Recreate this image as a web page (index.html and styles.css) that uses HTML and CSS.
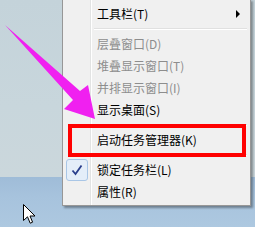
FILE: index.html
```html
<!DOCTYPE html>
<html>
<head>
<meta charset="utf-8">
<link rel="stylesheet" href="styles.css">
</head>
<body>
<div class="desktop">
  <div class="wall"></div>
  <div class="taskbar"></div>

  <div class="menu">
    <div class="item has-sub"><span class="label">工具栏(T)</span><span class="sub-arrow"></span></div>
    <div class="sep"></div>
    <div class="item disabled"><span class="label">层叠窗口(D)</span></div>
    <div class="item disabled"><span class="label">堆叠显示窗口(T)</span></div>
    <div class="item disabled"><span class="label">并排显示窗口(I)</span></div>
    <div class="item"><span class="label">显示桌面(S)</span></div>
    <div class="sep"></div>
    <div class="item"><span class="label">启动任务管理器(K)</span></div>
    <div class="sep"></div>
    <div class="item checked"><span class="check"><svg width="12" height="12" viewBox="0 0 12 12"><path d="M1.5 6.5 L4.5 10 L10.5 1.5" fill="none" stroke="#2a3f8c" stroke-width="1.8"/></svg></span><span class="label">锁定任务栏(L)</span></div>
    <div class="item"><span class="label">属性(R)</span></div>
  </div>

  <div class="highlight-box"></div>

  <svg class="pointer-arrow" width="110" height="130" viewBox="0 0 110 130">
    <polygon points="5,25 80,91 88,85 95,119 64,109 73,100" fill="#f020f0"/>
  </svg>

  <svg class="cursor" width="13" height="21" viewBox="0 0 13 21">
    <path d="M0.5 0.5 L0.5 16.5 L4.5 12.8 L7.2 19.2 L9.6 18.2 L7 12 L12 12 Z" fill="#fff" stroke="#000" stroke-width="1"/>
  </svg>
</div>
</body>
</html>
```

FILE: styles.css
```css
html, body {
  margin: 0;
  padding: 0;
}
body {
  width: 255px;
  height: 227px;
  overflow: hidden;
  font-family: "Noto Sans CJK SC", "Noto Sans", sans-serif;
}
.desktop {
  position: relative;
  width: 255px;
  height: 227px;
  display: flex;
  flex-direction: column;
}
.wall {
  height: 177px;
  background: linear-gradient(180deg, #c4d3da 0%, #c8d6dc 60%, #cbd7dc 100%);
}
.taskbar {
  flex: 1;
  background: linear-gradient(180deg, #9fbcd8 0%, #a7c3dd 40%, #adc8e0 100%);
}
.menu {
  position: absolute;
  left: 62px;
  top: -1px;
  width: 185px;
  padding: 3px 1px 2px 1px;
  background: #f0f0f0;
  border: 1px solid #979797;
  box-shadow: 2px 2px 2px rgba(0,0,0,0.35);
  background-image: linear-gradient(90deg, transparent 27px, #e2e3e3 27px, #e2e3e3 28px, #ffffff 28px, #ffffff 29px, transparent 29px);
}
.item {
  position: relative;
  height: 22px;
  display: flex;
  align-items: center;
  padding-left: 33px;
  font-size: 12px;
  color: #000;
  line-height: 22px;
}
.item.disabled {
  color: #8d8d8d;
}
.sub-arrow {
  position: absolute;
  right: 9px;
  top: 7px;
  width: 0;
  height: 0;
  border-top: 4px solid transparent;
  border-bottom: 4px solid transparent;
  border-left: 4px solid #000;
}
.sep {
  height: 8px;
  margin-left: 30px;
  margin-right: 2px;
  background: linear-gradient(180deg, transparent 3px, #e0e0e0 3px, #e0e0e0 4px, #ffffff 4px, #ffffff 5px, transparent 5px);
}
.check {
  position: absolute;
  left: 2px;
  top: 0;
  width: 20px;
  height: 20px;
  border: 1px solid #a9c6e6;
  border-radius: 3px;
  background: #e4eef9;
  display: flex;
  align-items: center;
  justify-content: center;
}
.highlight-box {
  position: absolute;
  left: 68px;
  top: 124px;
  width: 170px;
  height: 25px;
  border: 4px solid #ff0000;
}
.pointer-arrow {
  position: absolute;
  left: 0;
  top: 0;
}
.cursor {
  position: absolute;
  left: 23px;
  top: 204px;
}
```
